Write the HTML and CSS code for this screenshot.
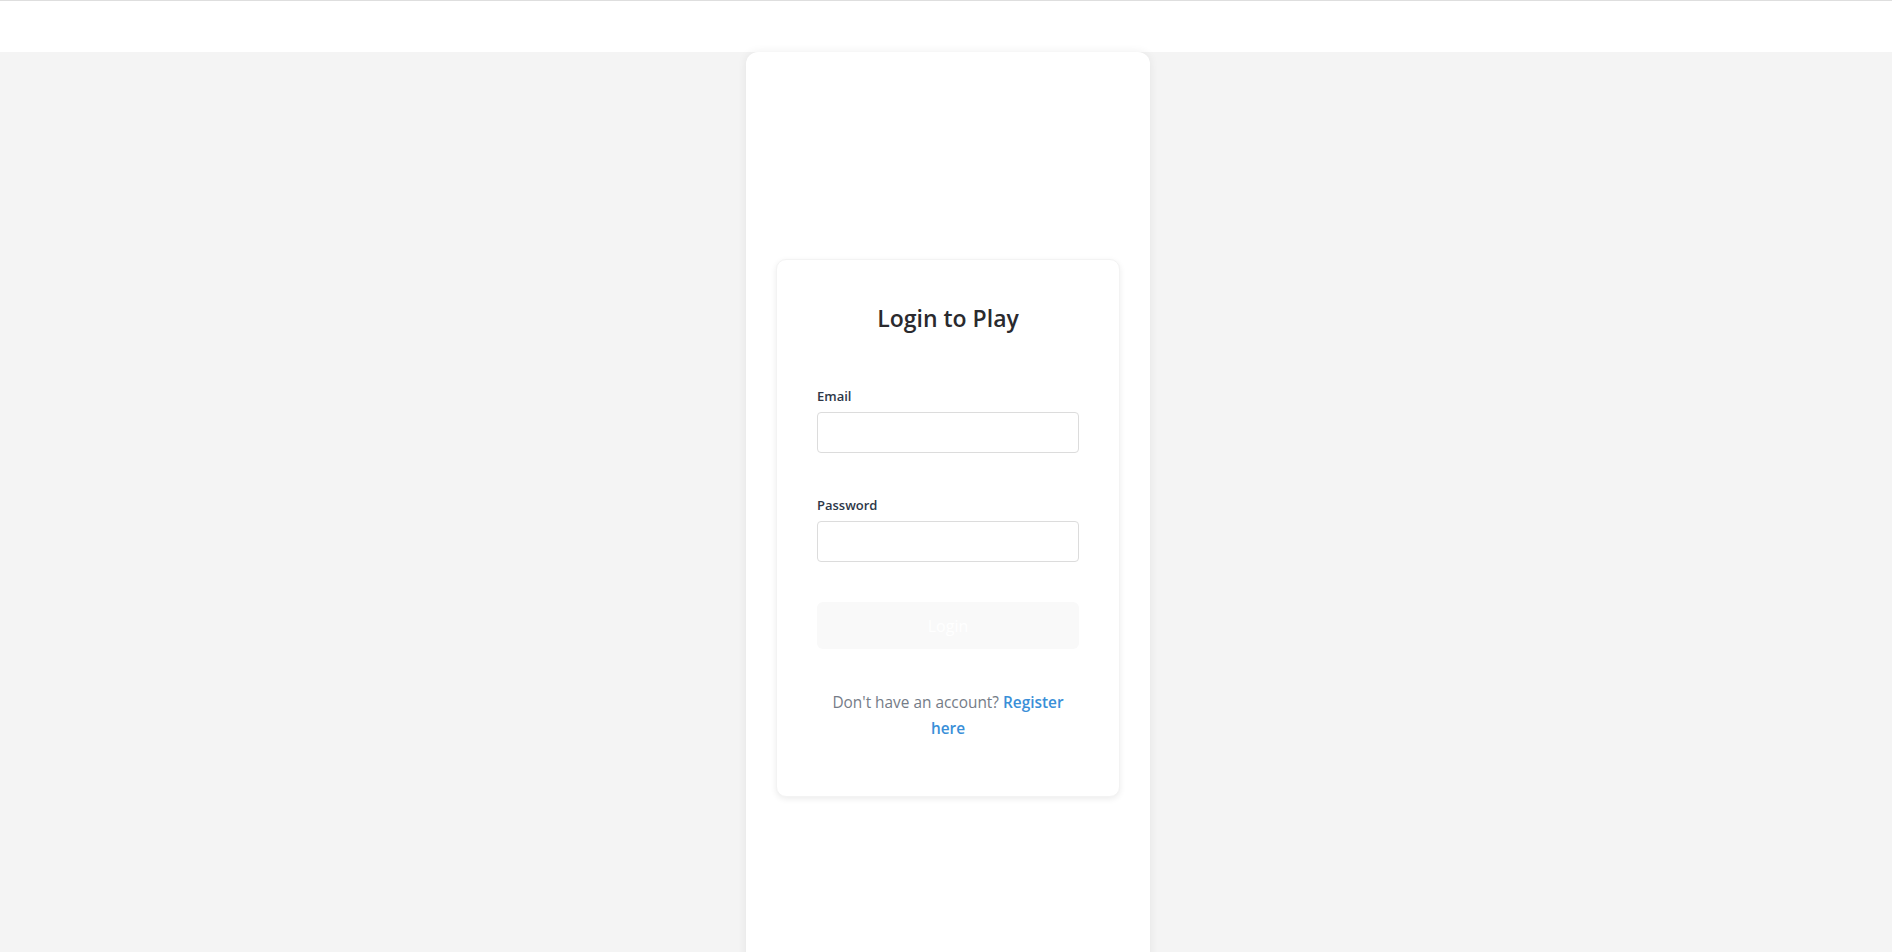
FILE: index.html
```html
<!DOCTYPE html>
<html lang="en">
<head>
<meta charset="utf-8">
<title>Login to Play</title>
<link rel="stylesheet" href="styles.css">
</head>
<body>
<header class="topbar"></header>
<main class="stage">
  <section class="panel">
    <div class="login-card">
      <h2 class="login-title">Login to Play</h2>
      <form class="login-form">
        <div class="field">
          <label class="field-label" for="email">Email</label>
          <input class="field-input" id="email" type="email">
        </div>
        <div class="field">
          <label class="field-label" for="password">Password</label>
          <input class="field-input" id="password" type="password">
        </div>
        <button class="login-button" type="button">Login</button>
      </form>
      <p class="register-text">Don't have an account? <a class="register-link" href="#">Register here</a></p>
    </div>
  </section>
</main>
</body>
</html>
```
FILE: styles.css
```css
* { box-sizing: border-box; }
html, body { margin: 0; padding: 0; }
html { height: 952px; overflow: hidden; }
body {
  background: #f4f4f4;
  font-family: "Open Sans", "Noto Sans", sans-serif;
  overflow: hidden;
  height: 952px;
}
.topbar {
  height: 52px;
  background: #ffffff;
  border-top: 1px solid #dedede;
}
.stage {
  display: flex;
  justify-content: center;
  padding-left: 4px;
}
.panel {
  width: 404px;
  min-height: 952px;
  background: #ffffff;
  border-radius: 12px 12px 0 0;
  box-shadow: 0 0 10px rgba(0, 0, 0, 0.07);
  padding: 0 30px;
  display: flex;
  flex-direction: column;
  justify-content: center;
}
.login-card {
  background: #ffffff;
  border: 1px solid #f3f3f3;
  border-radius: 10px;
  box-shadow: 0 2px 6px rgba(0, 0, 0, 0.08);
  padding: 40px 40px 54px;
}
.login-title {
  margin: 0 0 50px;
  font-size: 23px;
  line-height: 36px;
  font-weight: 600;
  color: #2a2a2e;
  text-align: center;
}
.login-form { margin: 0; }
.field { margin-bottom: 42px; }
.field + .field { margin-bottom: 40px; }
.field-label {
  display: block;
  font-size: 13px;
  line-height: 20px;
  font-weight: 600;
  color: #2d3748;
  margin-bottom: 6px;
}
.field-input {
  display: block;
  width: 100%;
  height: 41px;
  border: 1px solid #dcdcdc;
  border-radius: 4px;
  background: #fff;
  font: inherit;
  padding: 0 10px;
}
.login-button {
  display: block;
  width: 100%;
  height: 47px;
  border: none;
  border-radius: 6px;
  background: #f9f9f9;
  color: #ffffff;
  font-family: inherit;
  font-size: 16px;
  font-weight: 500;
}
.register-text {
  margin: 41px 0 0;
  font-size: 15.4px;
  line-height: 26px;
  color: #757c87;
  text-align: center;
}
.register-link {
  color: #3a8fd8;
  font-weight: 600;
  text-decoration: none;
}
```
